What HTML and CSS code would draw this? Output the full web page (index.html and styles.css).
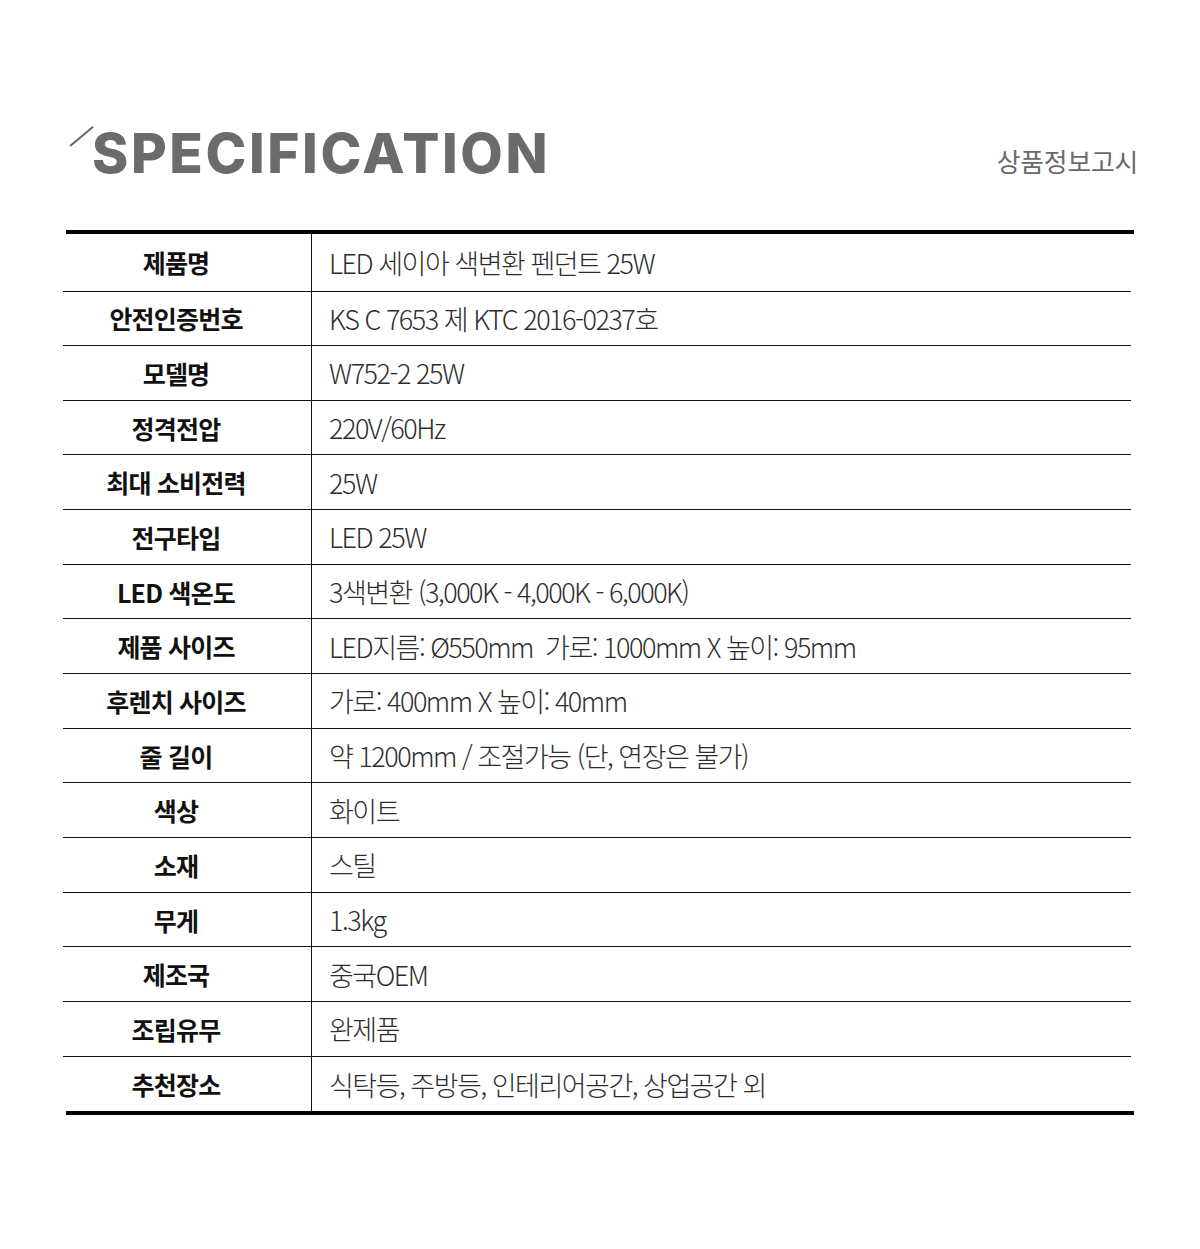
FILE: index.html
```html
<!DOCTYPE html>
<html lang="ko">
<head>
<meta charset="utf-8">
<link rel="stylesheet" href="styles.css">
</head>
<body>
<div class="page">
  <header class="head">
    <div class="title-wrap">
      <span class="slash"></span>
      <h1 class="title">SPECIFICATION</h1>
    </div>
    <div class="sub">상품정보고시</div>
  </header>
  <div class="spec">
    <div class="thick"></div>
    <div class="row first"><div class="k">제품명</div><div class="v">LED 세이아 색변환 펜던트 25W</div></div>
    <div class="row"><div class="k">안전인증번호</div><div class="v">KS C 7653 제 KTC 2016-0237호</div></div>
    <div class="row"><div class="k">모델명</div><div class="v">W752-2 25W</div></div>
    <div class="row"><div class="k">정격전압</div><div class="v">220V/60Hz</div></div>
    <div class="row"><div class="k">최대 소비전력</div><div class="v">25W</div></div>
    <div class="row"><div class="k">전구타입</div><div class="v">LED 25W</div></div>
    <div class="row"><div class="k">LED 색온도</div><div class="v">3색변환 (3,000K - 4,000K - 6,000K)</div></div>
    <div class="row"><div class="k">제품 사이즈</div><div class="v">LED지름: Ø550mm&nbsp; 가로: 1000mm X 높이: 95mm</div></div>
    <div class="row"><div class="k">후렌치 사이즈</div><div class="v">가로: 400mm X 높이: 40mm</div></div>
    <div class="row"><div class="k">줄 길이</div><div class="v">약 1200mm / 조절가능 (단, 연장은 불가)</div></div>
    <div class="row"><div class="k">색상</div><div class="v">화이트</div></div>
    <div class="row"><div class="k">소재</div><div class="v">스틸</div></div>
    <div class="row"><div class="k">무게</div><div class="v">1.3kg</div></div>
    <div class="row"><div class="k">제조국</div><div class="v">중국OEM</div></div>
    <div class="row"><div class="k">조립유무</div><div class="v">완제품</div></div>
    <div class="row last"><div class="k">추천장소</div><div class="v">식탁등, 주방등, 인테리어공간, 상업공간 외</div></div>
    <div class="thick"></div>
  </div>
</div>
</body>
</html>
```
FILE: styles.css
```css
* { box-sizing: border-box; margin: 0; padding: 0; }
html, body { background: #fff; }
body {
  font-family: "Noto Sans CJK KR", "Noto Sans", sans-serif;
  color: #111;
}
.page {
  width: 1200px;
  padding: 114px 0 0 63px;
}
.head {
  display: flex;
  justify-content: space-between;
  align-items: flex-end;
  width: 1075px;
  height: 70px;
}
.title-wrap {
  position: relative;
  padding-left: 29px;
}
.slash {
  position: absolute;
  left: 7px;
  top: 23px;
  width: 30px;
  height: 1.6px;
  background: #666;
  transform: rotate(-40deg);
  transform-origin: left center;
}
.title {
  font-family: "Inter", sans-serif;
  font-weight: 800;
  font-size: 55px;
  line-height: 62px;
  color: #6b6b6b;
  letter-spacing: 2.6px;
}
.sub {
  font-size: 25.8px;
  color: #6a6a6a;
  line-height: 30px;
  padding-bottom: 8px;
  letter-spacing: -0.2px;
}
.spec {
  margin-top: 46px;
  width: 1071px;
}
.thick {
  height: 4px;
  background: #000;
  margin-left: 3px;
}
.row {
  display: flex;
  height: 54.67px;
  border-bottom: 1px solid #111;
  margin-right: 3px;
}
.row.first { height: 57.5px; }
.row.last { border-bottom: none; }
.k {
  width: 249px;
  flex: none;
  border-right: 1px solid #111;
  display: flex;
  align-items: center;
  justify-content: center;
  padding-right: 22px;
  font-weight: 700;
  font-size: 25px;
  letter-spacing: -0.8px;
  color: #111;
}
.v {
  flex: 1;
  display: flex;
  align-items: center;
  padding-left: 17px;
  font-weight: 300;
  font-size: 27px;
  letter-spacing: -1.5px;
  color: #2e2e2e;
}
```
